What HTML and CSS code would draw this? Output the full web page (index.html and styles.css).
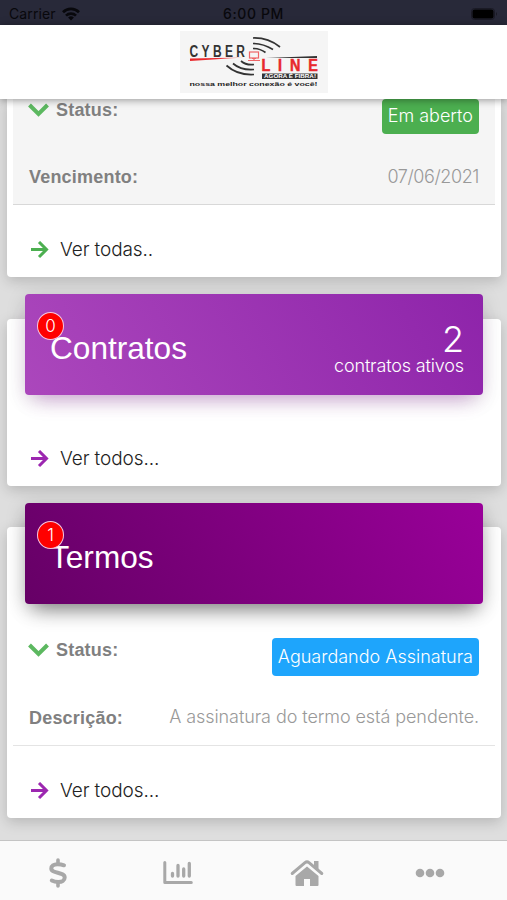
FILE: index.html
```html
<!DOCTYPE html>
<html lang="pt-BR">
<head>
  <meta charset="utf-8">
  <title>Cyber Line</title>
  <link rel="stylesheet" href="styles.css">
</head>
<body>
  <div class="app">
    <div class="status-bar">
      <div class="carrier">
        <span>Carrier</span>
        <svg width="18" height="14" viewBox="0 0 18 14" fill="none" stroke="#08080c" stroke-width="2.7">
          <path d="M1 5.2a11.5 11.5 0 0 1 16 0"/>
          <path d="M4 8.6a7.2 7.2 0 0 1 10 0"/>
          <path d="M9 13.5L6.1 10.6a4.2 4.2 0 0 1 5.8 0z" fill="#08080c" stroke="none"/>
        </svg>
      </div>
      <span class="time">6:00 PM</span>
      <div class="battery-wrap">
        <svg width="27" height="12" viewBox="0 0 27 12">
          <rect x="0.5" y="0.5" width="23" height="11" rx="3" fill="none" stroke="#1a1a25"/>
          <rect x="1.5" y="1.5" width="21" height="9" rx="2" fill="#000"/>
          <path d="M25 4a2.5 2.5 0 0 1 0 4z" fill="#191923"/>
        </svg>
      </div>
    </div>

    <header class="header">
      <svg class="logo" width="148" height="62" viewBox="0 0 148 62">
        <defs>
          <linearGradient id="redLine"><stop offset="0.5" stop-color="#e8292d"/><stop offset="1" stop-color="#f3b5b5"/></linearGradient>
        </defs>
        <rect width="148" height="62" fill="#f5f5f5"/>
        <text class="logo-text" transform="translate(9.500 26) scale(.75 1)" font-size="16" textLength="74" lengthAdjust="spacing" fill="#333">CYBER</text>
        <path d="M10 27.500L64 26.500L10 30z" fill="url(#redLine)"/>
        <g fill="none" stroke="#333" stroke-width="1.700">
          <path d="M73 7q15-.5 27 9"/>
          <path d="M73 12.500q10 0 20 6"/>
          <path d="M73 17.500q7 0 12.500 4"/>
          <path d="M46.500 34.500q11 10 27.500 9"/>
          <path d="M53 32.500q8 7 21 6"/>
          <path d="M61 30q5 4.500 13 3.500"/>
        </g>
        <g fill="none" stroke="#ef6567" stroke-width="1.200">
          <rect x="69.500" y="21" width="9" height="6"/>
          <path d="M74 27v2.500M68 29.500h12M72 27.500h4"/>
        </g>
        <path d="M86 27L137 25v2z" fill="#333"/>
        <text class="logo-text" transform="translate(81.500 39.900) scale(.9 1)" font-size="16" textLength="62.500" lengthAdjust="spacing" fill="#e8292d" stroke="#e8292d" stroke-width=".5">LINE</text>
        <rect x="82" y="42.500" width="55.500" height="5.500" fill="#333"/>
        <text class="logo-text" x="84" y="47.200" font-size="5.300" textLength="52" lengthAdjust="spacingAndGlyphs" fill="#fff">AGORA É FIBRA!</text>
        <text class="logo-text" x="9.500" y="54.800" font-size="5.800" textLength="128" lengthAdjust="spacingAndGlyphs" fill="#222">nossa melhor conexão é você!</text>
      </svg>
    </header>

    <main class="content">
      <section class="card card-faturas">
        <div class="details shaded">
          <div class="row">
            <div class="label">
              <svg class="chevron" width="21" height="14" viewBox="0 0 21 14"><path d="M1.500 2l9 9 9-9"/></svg>
              <span>Status:</span>
            </div>
            <span class="tag tag-green">Em aberto</span>
          </div>
          <div class="row">
            <span class="label">Vencimento:</span>
            <span class="value date">07/06/2021</span>
          </div>
        </div>
        <div class="card-link green">
          <svg class="arrow" width="18" height="18" viewBox="0 0 18 18"><path d="M0 8.500h15.500M8 1l7.500 7.500L8 16"/></svg>
          <span>Ver todas..</span>
        </div>
      </section>

      <section class="card card-contratos">
        <div class="banner banner-contratos">
          <span class="badge">0</span>
          <h2>Contratos</h2>
          <div class="total">
            <div class="total-number">2</div>
            <div class="total-text">contratos ativos</div>
          </div>
        </div>
        <div class="card-link purple">
          <svg class="arrow" width="18" height="18" viewBox="0 0 18 18"><path d="M0 8.500h15.500M8 1l7.500 7.500L8 16"/></svg>
          <span>Ver todos...</span>
        </div>
      </section>

      <section class="card card-termos">
        <div class="banner banner-termos">
          <span class="badge">1</span>
          <h2>Termos</h2>
        </div>
        <div class="details">
          <div class="row">
            <div class="label">
              <svg class="chevron" width="21" height="14" viewBox="0 0 21 14"><path d="M1.500 2l9 9 9-9"/></svg>
              <span>Status:</span>
            </div>
            <span class="tag tag-blue">Aguardando Assinatura</span>
          </div>
          <div class="row">
            <span class="label">Descrição:</span>
            <span class="value">A assinatura do termo está pendente.</span>
          </div>
        </div>
        <div class="card-link purple">
          <svg class="arrow" width="18" height="18" viewBox="0 0 18 18"><path d="M0 8.500h15.500M8 1l7.500 7.500L8 16"/></svg>
          <span>Ver todos...</span>
        </div>
      </section>
    </main>

    <nav class="tabs">
      <a class="tab">
        <svg width="18" height="30" viewBox="0 0 18 30" fill="none" stroke="#a8a8a8" stroke-linecap="round">
          <path d="M9 2v4M9 24v4" stroke-width="3.600"/>
          <path d="M15 7.300C13 6.500 11 6.200 8.500 6.200C4.500 6.200 2.300 8 2.300 10.500C2.300 16 15.700 13.500 15.700 19.500C15.700 22.300 13 24 9.500 24C7 24 4.500 23.400 2.800 22.500" stroke-width="4"/>
        </svg>
      </a>
      <a class="tab">
        <svg width="30" height="24" viewBox="0 0 30 24" fill="none" stroke="#a8a8a8" stroke-linecap="round" stroke-linejoin="round">
          <path d="M1.800 1.500v20h26.500" stroke-width="3"/>
          <path d="M9.500 12.500v2.500M15 4.500v10.500M20.700 8v7M26.300 2.500v12.500" stroke-width="3.300"/>
        </svg>
      </a>
      <a class="tab">
        <svg width="34" height="28" viewBox="0 0 34 28">
          <path d="M2.200 14.500L15 3.700q2-1.600 4 0l12.800 10.800" fill="none" stroke="#a8a8a8" stroke-width="3" stroke-linecap="round" stroke-linejoin="round"/>
          <path d="M24 2h4.500v9.500L24 7.700z" fill="#a8a8a8"/>
          <path d="M17 7.500L28.500 17V26q0 1-1 1h-7.500v-7h-6v7h-7.500q-1 0-1-1v-9z" fill="#a8a8a8"/>
        </svg>
      </a>
      <a class="tab">
        <svg width="30" height="10" viewBox="0 0 30 10" fill="#a8a8a8">
          <circle cx="5" cy="5" r="4.300"/>
          <circle cx="15" cy="5" r="4.300"/>
          <circle cx="25" cy="5" r="4.300"/>
        </svg>
      </a>
    </nav>
  </div>
</body>
</html>
```

FILE: styles.css
```css
* {
  box-sizing: border-box;
}

body {
  margin: 0;
  font-family: Inter, "Liberation Sans", sans-serif;
  font-weight: 300;
}

.app {
  height: 900px;
  display: flex;
  flex-direction: column;
  overflow: hidden;
  background-color: #dedede;
}

.status-bar {
  height: 25px;
  flex: none;
  display: grid;
  grid-template-columns: 1fr auto 1fr;
  align-items: center;
  padding: 2px 9px 0;
  background-color: #282939;
  color: #08080c;
  font-size: 14px;
}

.carrier {
  display: flex;
  align-items: center;
  gap: 6px;
  font-weight: 400;
  letter-spacing: 0.1px;
}

.time {
  font-weight: 500;
  letter-spacing: 0.6px;
}

.battery-wrap {
  display: flex;
  justify-content: flex-end;
}

.header {
  height: 74px;
  flex: none;
  display: flex;
  justify-content: center;
  padding-top: 6px;
  background-color: #fff;
  box-shadow: 0 1px 8px rgba(0, 0, 0, 0.4);
  z-index: 1;
}

.logo-text {
  font-family: "Liberation Sans", sans-serif;
  font-weight: bold;
}

.content {
  flex: 1;
  min-height: 0;
  padding: 0 6px 0 7px;
}

.card {
  background-color: #fff;
  border-radius: 4px;
  box-shadow: 0 4px 14px rgba(0, 0, 0, 0.18);
}

.card-faturas {
  height: 178px;
  padding: 0 6px;
  border-radius: 0 0 4px 4px;
}

.card-contratos {
  height: 167px;
  margin-top: 42px;
}

.card-termos {
  height: 291px;
  margin-top: 41px;
}

.banner {
  position: relative;
  top: -25px;
  height: 101px;
  margin: 0 18px;
  padding: 0 19px 0 25px;
  display: flex;
  align-items: center;
  justify-content: space-between;
  border-radius: 4px;
  color: #fff;
}

.banner-contratos {
  background: linear-gradient(60deg, #ab47bc, #8e24aa);
  box-shadow: 0 12px 20px -10px rgba(156, 39, 176, 0.4), 0 4px 20px rgba(0, 0, 0, 0.14);
}

.banner-termos {
  top: -24px;
  background: linear-gradient(60deg, #660066, #990099);
  box-shadow: 0 12px 20px -8px rgba(0, 0, 0, 0.45), 0 4px 20px rgba(0, 0, 0, 0.18);
}

.banner h2 {
  margin: 7px 0 0;
  font-family: "Liberation Sans", sans-serif;
  font-size: 31.6px;
  font-weight: 400;
}

.badge {
  position: absolute;
  top: 18px;
  left: 12px;
  width: 27px;
  height: 28px;
  border: 1.5px solid #f6c6e0;
  border-radius: 50%;
  background-color: #ff0000;
  font-size: 17px;
  line-height: 26px;
  text-align: center;
}

.total {
  text-align: right;
}

.total-number {
  margin-top: 9px;
  font-size: 36px;
  line-height: 32px;
}

.total-text {
  font-size: 18px;
  line-height: 21px;
  letter-spacing: -0.15px;
}

.details {
  height: 106px;
  padding: 0 16px;
  border-bottom: 1px solid #e4e4e4;
}

.shaded {
  background-color: #f5f5f5;
  border-bottom-color: #d8d8d8;
}

.row {
  display: flex;
  justify-content: space-between;
  align-items: flex-start;
  color: #999;
  font-size: 18px;
  line-height: 22px;
}

.row + .row {
  margin-top: 32px;
}

.value {
  letter-spacing: -0.08px;
}

.date {
  letter-spacing: -0.4px;
}

.label {
  display: flex;
  align-items: center;
  color: #808080;
  font-family: "Liberation Sans", sans-serif;
  font-size: 18px;
  font-weight: bold;
  letter-spacing: 0.2px;
}

.chevron {
  margin-left: -1px;
  margin-right: 7px;
}

.chevron path {
  fill: none;
  stroke: #5cb860;
  stroke-width: 4;
}

.tag {
  height: 38px;
  padding: 0 6px;
  border-radius: 4px;
  color: #fff;
  line-height: 38px;
}

.tag-green {
  height: 35px;
  background-color: #4caf50;
  line-height: 34px;
}

.tag-blue {
  background-color: #1ea5fc;
}

.card-termos .details {
  height: 143px;
  margin: -25px 6px 0;
  padding-top: 35px;
}

.card-termos .row + .row {
  margin-top: 30px;
}

.card-termos .label {
  padding-top: 1px;
}

.card-link {
  display: flex;
  align-items: center;
  gap: 11px;
  margin-top: 34px;
  padding-left: 18px;
  color: #222;
  font-size: 19px;
  line-height: 22px;
  letter-spacing: -0.1px;
}

.card-contratos .card-link {
  margin-top: 28px;
  padding-left: 24px;
}

.card-termos .card-link {
  padding-left: 24px;
}

.arrow path {
  fill: none;
  stroke-width: 3;
}

.green .arrow path {
  stroke: #4caf50;
}

.purple .arrow path {
  stroke: #9c27b0;
}

.tabs {
  height: 60px;
  flex: none;
  display: grid;
  grid-template-columns: 115px 126px 131px 1fr;
  padding-top: 4px;
  border-top: 1px solid #c4c4c4;
  background-color: #fafafa;
  z-index: 1;
}

.tab {
  display: flex;
  align-items: center;
  justify-content: center;
}

.tab:last-child {
  padding-right: 20px;
}
```
